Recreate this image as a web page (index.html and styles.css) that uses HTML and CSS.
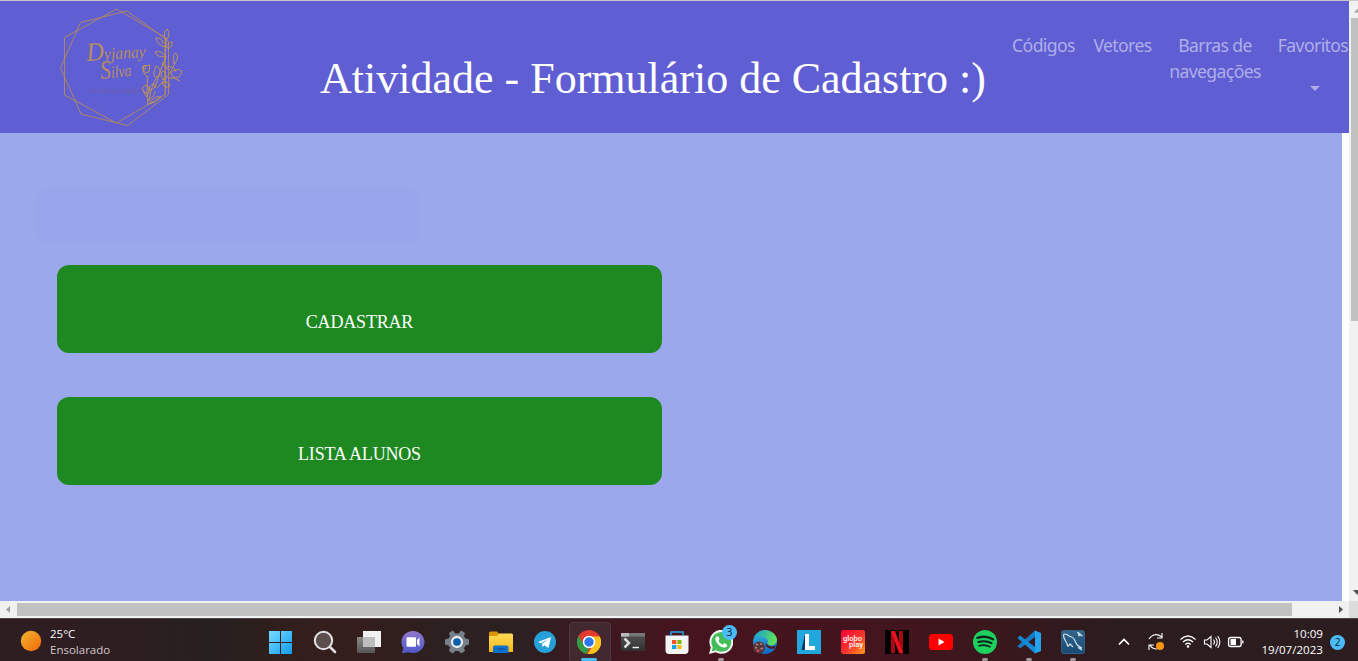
FILE: index.html
```html
<!DOCTYPE html>
<html lang="pt-BR">
<head>
<meta charset="utf-8">
<title>Atividade - Formulário de Cadastro</title>
<link rel="stylesheet" href="styles.css">
</head>
<body>
<div class="screen">
  <div class="viewport">
    <div class="page">
      <header class="header">
        <svg class="logo" viewBox="40 0 160 132" fill="none" stroke="#b58a58" stroke-width=".9">
          <path d="M64.500 37.500L116.500 9L165.500 37.500V94.500L116.500 123L64.500 95Z"/>
          <path d="M80.500 22.500L127 11L168.500 41V94.500L127.500 125.500L81 114L60.500 68Z"/>
          <path d="M165 38V95"/>
          <text class="script" x="87" y="61" textLength="59" lengthAdjust="spacingAndGlyphs" transform="rotate(-4 88 60)"><tspan class="initial">D</tspan>yjanay</text>
          <text class="script" x="101" y="79" textLength="31" lengthAdjust="spacingAndGlyphs" transform="rotate(-6 101 79)"><tspan class="initial">S</tspan>ilva</text>
          <text class="tagline" x="89" y="92.500" textLength="55">DESENVOLVIMENTO</text>
          <g stroke="#c9994a">
            <path d="M148 105Q146 86 148 76M148 94Q138 89 146 85Q151 88 148 94M149 91Q158 87 154 84Q149 84 149 91M148 100Q156 95 155 91M147 97L143 91M147 77Q142 72 143 67Q146 63 145 70M143 66L150 65L149 72Q145 74 143 70ZM156 66Q162 68 159 76Q153 79 154 72ZM157 77Q151 86 149 101M166 56Q160 70 155 88M165 51Q167 42 166 39M166 39Q162 34 167 29Q171 34 167 39ZM167 47Q157 46 156 38Q162 37 163 44M168 49Q174 45 172 42Q167 43 168 49M166 57Q156 57 155 52Q162 50 166 57M174 62Q172 54 176 53Q180 58 174 64ZM175 63Q171 74 157 88M171 73Q176 67 182 71Q180 80 173 77ZM168 78Q175 77 180 81M162 83Q171 80 169 87Q164 88 162 83M149 104Q154 95 161 97Q156 103 149 104M163 80Q159 73 163 71Q168 74 163 80M167 66Q175 67 176 72M170 70Q162 66 163 62"/>
          </g>
        </svg>
        <h1 class="title">Atividade - Formulário de Cadastro :)</h1>
        <nav class="nav">
          <a class="w1">Códigos</a><a class="w2">Vetores</a><a class="w3">Barras de<br>navegações</a><a class="w4">Favoritos<i class="caret"></i></a>
        </nav>
      </header>
      <main class="main">
        <div class="ghost"></div>
        <a class="button">CADASTRAR</a>
        <a class="button">LISTA ALUNOS</a>
      </main>
    </div>
    <div class="vscroll"><svg viewBox="0 0 9 17"><path d="M5 11.500L9 7.500V11.500Z" fill="#a0a0a0"/></svg><div class="vthumb"></div><svg class="down" viewBox="0 0 9 17"><path d="M4 6H9V10.500H8Z" fill="#505050"/></svg></div>
  </div>
  <div class="hscroll">
    <svg viewBox="0 0 17 17"><path d="M10 5V12L6 8.500Z" fill="#a0a0a0"/></svg>
    <div class="hthumb"></div>
    <svg class="right" viewBox="0 0 17 17"><path d="M7 5V12L11 8.500Z" fill="#505050"/></svg>
    <div class="corner"></div>
  </div>
  <footer class="taskbar">
    <svg width="0" height="0" class="defs"><defs>
      <linearGradient id="sun" x2="1" y2="1"><stop stop-color="#efb534"/><stop offset="1" stop-color="#f46808"/></linearGradient>
      <linearGradient id="win" x2="1" y2="1"><stop stop-color="#77dcff"/><stop offset="1" stop-color="#119bf0"/></linearGradient>
      <linearGradient id="task" x2="0" y2="1"><stop stop-color="#8a8a8a"/><stop offset="1" stop-color="#555"/></linearGradient>
      <linearGradient id="chat" x2="0" y2="1"><stop stop-color="#8f78cc"/><stop offset="1" stop-color="#4f57c8"/></linearGradient>
      <linearGradient id="folder" x2="0" y2="1"><stop stop-color="#ffdb59"/><stop offset="1" stop-color="#f8b816"/></linearGradient>
      <linearGradient id="edge" x2="0" y2="1"><stop stop-color="#39b9dc"/><stop offset="1" stop-color="#0e65c2"/></linearGradient>
      <linearGradient id="edge2" x2="1" y2=".3"><stop stop-color="#169cdd"/><stop offset="1" stop-color="#5ee05b"/></linearGradient>
      <linearGradient id="globo" x2="1" y2="1"><stop stop-color="#fb0234"/><stop offset=".55" stop-color="#fc352d"/><stop offset="1" stop-color="#ff9d1d"/></linearGradient>
      <linearGradient id="mysql" x2="0" y2="1"><stop stop-color="#34668c"/><stop offset="1" stop-color="#174a73"/></linearGradient>
      <linearGradient id="dark" x2="0" y2="1"><stop stop-color="#555"/><stop offset="1" stop-color="#303030"/></linearGradient>
    </defs></svg>
    <div class="weather">
      <svg width="22" height="22" viewBox="0 0 22 22"><circle cx="11" cy="11" r="10.200" fill="url(#sun)"/></svg>
      <div class="weather-text"><span>25°C</span><span class="dim">Ensolarado</span></div>
    </div>
    <div class="apps">
      <div class="app"><svg viewBox="0 0 24 24"><path d="M0 1H11V12H0ZM12 1H23V12H12ZM0 13H11V24H0ZM12 13H23V24H12Z" fill="url(#win)"/></svg></div>
      <div class="app"><svg viewBox="0 0 24 24"><circle cx="10.500" cy="10.500" r="8.700" fill="#5c4e4d" stroke="#e4e4e8" stroke-width="2"/><path d="M17 17L22 22" stroke="#dedee3" stroke-width="2.600" stroke-linecap="round"/></svg></div>
      <div class="app"><svg viewBox="0 0 24 24"><path d="M6 1H24V17H6Z" fill="#f1f1f1"/><path d="M0 7H18V23H0Z" fill="url(#task)"/><path d="M6 7H18V17H6Z" fill="#bdbdbd"/></svg></div>
      <div class="app"><svg viewBox="0 0 24 24"><path d="M12 1C5 1 .500 6 .500 12Q.500 16 2.500 18L1 22.500Q1 23.500 3 23L7 22.200Q9 23 12 23C18.500 23 23.500 18 23.500 12S18.500 1 12 1Z" fill="url(#chat)"/><rect x="5.500" y="7.300" width="9.500" height="9.500" rx="1" fill="#fff"/><path d="M16 10L18.500 7.500V16.500L16 14Z" fill="#fff"/></svg></div>
      <div class="app"><svg viewBox="0 0 24 24"><path d="M8 1L10 4H14L16 1L19.500 3L18.500 6.500L20.500 9L24 10V14L20.500 15L18.500 18L19.500 21L16 23L14 20.500H10L8 23L4.500 21L5.500 17.500L3.500 15L0 14V10L3.500 9L5.500 6.500L4.500 3Z" fill="#78818a" stroke="#78818a" stroke-linejoin="round"/><circle cx="12" cy="12" r="5" fill="#075eaf" stroke="#e9e9e9" stroke-width="2.300"/></svg></div>
      <div class="app"><svg viewBox="0 0 24 24"><path d="M0 3Q0 1.500 1.500 1.500H8L10 4H22.500Q24 4 24 5.500V9H0Z" fill="#d99408"/><path d="M0 6H8L10 3.500H22.500Q24 3.500 24 5V22H0Z" fill="url(#folder)"/><path d="M4 23V17.500Q4 15.500 6 15.500H17.500Q19.500 15.500 19.500 17.500V23Z" fill="#0e70ca"/><path d="M8 19H16" stroke="#0856a0" stroke-width="1.500"/></svg></div>
      <div class="app"><svg viewBox="0 0 24 24"><circle cx="12" cy="12" r="11" fill="#279fd7"/><path d="M5 12L18 7L15.500 18L11.500 15.300L9.500 17L9 14L15 9L8 13.300Z" fill="#fff"/></svg></div>
      <div class="app active"><svg viewBox="0 0 24 24"><circle cx="12" cy="12" r="12" fill="#e33b2e"/><path d="M1.600 6L6.800 15L12 18L9.800 23.800A12 12 0 0 1 1.600 6Z" fill="#2e9f48"/><path d="M12 6.500H22.700A12 12 0 0 1 10.500 24L17 14Z" fill="#fac31c"/><circle cx="12" cy="12" r="5.500" fill="#2c77ea" stroke="#fff" stroke-width="1.500"/></svg></div>
      <div class="app"><svg viewBox="0 0 24 24"><path d="M0 3H24V21H0Z" fill="url(#dark)"/><path d="M0 3H24V6.500H0Z" fill="#777"/><path d="M0 3H8V6.500H0Z" fill="#bbb"/><path d="M3.500 8.500L8 13L3.500 17.500" fill="none" stroke="#ddd" stroke-width="2.500"/><path d="M11.500 17.500H18" stroke="#eee" stroke-width="1.500"/></svg></div>
      <div class="app"><svg viewBox="0 0 24 24"><path d="M.500 5.500H23.500V20Q23.500 24 20 24H4Q.500 24 .500 20Z" fill="#f4f4f5"/><path d="M6 6V2H18V6" fill="none" stroke="#23a4e6" stroke-width="1.500"/><path d="M7 10H11.300V14H7Z" fill="#f25022"/><path d="M12.300 10H16.500V14H12.300Z" fill="#7fba00"/><path d="M7 15H11.300V19H7Z" fill="#00a4ef"/><path d="M12.300 15H16.500V19H12.300Z" fill="#ffb900"/></svg></div>
      <div class="app run"><svg viewBox="0 0 24 24"><path d="M0 24L1.800 17.500A12 12 0 1 1 6.500 22.300Z" fill="#f3f3f3"/><path d="M2.700 21.500L3.800 17A9.900 9.900 0 1 1 7 20.300Z" fill="#42bd58"/><path d="M7.500 6.500Q5 9 8 13Q11.500 18 16 17.500Q19 16.500 18 14.500L15 13L13.500 14.700Q10.500 13.500 9.500 10.700L10.600 9L9.500 6.500Z" fill="#fff"/></svg><span class="count">3</span></div>
      <div class="app"><svg viewBox="0 0 24 24"><circle cx="12" cy="12" r="12" fill="url(#edge)"/><path d="M1 8C5-2 21-2 24 9C24 15 18 17 14 14Q17 10 11 7Q5 5 1 10Z" fill="url(#edge2)"/><path d="M14 14Q15 16 19 16.500L23 15.500L21.500 18.500Q13 20 12.500 13Z" fill="#4b172a"/><circle cx="6" cy="17.500" r="6" fill="#553539"/><path d="M3 14L5 15M7 13.500L9 14.500M2 18L4 17.500M7.500 19L10 18" fill="none" stroke="#b18487" stroke-width="1.500"/><circle cx="5" cy="20.500" r="1.500" fill="#dd3250"/></svg></div>
      <div class="app"><svg viewBox="0 0 24 24"><path d="M0 0H24V24H0Z" fill="#21a7dc"/><path d="M8 4L4.500 20H16L9 18Z" fill="#083762"/><path d="M8 4H12V16H18V20H8Z" fill="#fff"/></svg></div>
      <div class="app"><svg viewBox="0 0 24 24"><rect width="24" height="24" rx="2.500" fill="url(#globo)"/><text class="globo" x="2" y="11" textLength="19" lengthAdjust="spacingAndGlyphs">globo</text><text class="globo" x="8" y="17" textLength="14" lengthAdjust="spacingAndGlyphs">play</text></svg></div>
      <div class="app"><svg viewBox="0 0 24 24"><path d="M0 0H24V24H0Z" fill="#000"/><path d="M6 1H10V23L6 23.500ZM14 1H18V23.500L14 23Z" fill="#a90812"/><path d="M6 1H10L18 23.500L14 23Z" fill="#e51420"/></svg></div>
      <div class="app"><svg viewBox="0 0 24 24"><rect y="4" width="24" height="16" rx="3.500" fill="#f00"/><path d="M9.500 8.500L15.500 12L9.500 15.500Z" fill="#fff"/></svg></div>
      <div class="app run"><svg viewBox="0 0 24 24"><circle cx="12" cy="12" r="12" fill="#1ed05e"/><g fill="none" stroke="#10251b" stroke-linecap="round"><path d="M4.500 7.800Q13 5.200 20 9.300" stroke-width="2.400"/><path d="M5.300 12Q12.500 9.800 18.500 13.200" stroke-width="2"/><path d="M6 15.800Q12 14 17 16.800" stroke-width="1.700"/></g></svg></div>
      <div class="app run"><svg viewBox="0 0 24 24"><path d="M18 .500L24 3V21L18 23.500Z" fill="#25a2ed"/><path d="M18 .500V7L3 18.500L.500 16Z" fill="#167bc4"/><path d="M18 23.500V17L3 5.500L.500 8Z" fill="#118bd5"/></svg></div>
      <div class="app run"><svg viewBox="0 0 24 24"><rect x=".5" y=".5" width="23" height="23" rx="2" fill="url(#mysql)" stroke="#315f83"/><path d="M7 16.500Q6 13 4 10Q1 4 4 4Q6 4 8 6Q13 7 14.500 12Q16 16 21 18L18 18L21 20M7 16.500L9 14L12 17" fill="none" stroke="#d4e1ea" stroke-width="1.200"/><path d="M16 2L18.500 3L21.500 6L19 5.500L17.500 6V4Z" fill="#d4e1ea" stroke="#d4e1ea" stroke-width=".6"/></svg></div>
    </div>
    <div class="tray">
      <svg viewBox="0 0 130 24" width="130" height="24" fill="none" stroke="#fff" stroke-width="1.300">
        <path d="M4 14.500L9 9.500L14 14.500" stroke-width="1.700"/>
        <path d="M34 9Q39 1.500 47 7M47 3V8H42M42 19Q37 19 35 15M34 20V15H39" stroke-width="1.100"/><circle cx="45" cy="16" r="4" fill="#f7960b" stroke="none"/>
        <path d="M65.500 9.500Q73 2.500 80.500 9.500M68 12Q73 7.500 78 12M70.300 14.500Q73 12 75.700 14.500"/><circle cx="73" cy="16.500" r="1.300" fill="#fff" stroke="none"/>
        <path d="M89.500 10H92L96 6.500V17.500L92 14H89.500ZM98.500 9.500Q100.500 12 98.500 14.500M100.500 7.500Q104 12 100.500 16.500M102.700 6Q107 12 102.700 18" stroke-width="1.100"/>
        <rect x="113.600" y="7.500" width="12.500" height="9" rx="2"/><path d="M115.500 9H121V15H115.500Z" fill="#fff" stroke="none"/><path d="M127.800 10.500V13.500"/>
      </svg>
      <div class="clock"><span>10:09</span><span>19/07/2023</span></div>
      <span class="notice">2</span>
    </div>
  </footer>
</div>
</body>
</html>
```
FILE: styles.css
```css
* { box-sizing: border-box; }
body { margin: 0; overflow: hidden; }
.screen { width: 1358px; height: 661px; display: flex; flex-direction: column; border-top: 1px solid #c8c8cb; font-family: "Open Sans", sans-serif; }
.viewport { display: flex; height: 600px; }
.page { width: 1349px; background: #fff; }
.header { display: flex; height: 132px; background: #5f5ed3; padding-left: 40px; }
.logo { width: 160px; height: 132px; flex: none; margin-top: -1px; }
.script { font: italic 17px "Liberation Serif", serif; fill: #b98d62; stroke: none; }
.initial { font-size: 26px; }
.tagline { font: 4.500px "Liberation Sans", sans-serif; fill: #72609c; stroke: none; }
.title { margin: 50px 0 0 120px; width: 667px; flex: none; white-space: nowrap; font: 400 44px/55px "Liberation Serif", serif; color: #fff; }
.nav { display: flex; margin-left: 21px; padding-top: 31px; font: 17.600px/26.400px "Noto Sans", sans-serif; letter-spacing: -.6px; color: #afaee9; text-align: center; white-space: nowrap; }
.nav a { display: block; flex: none; }
.w1 { width: 71px; }
.w2 { width: 87px; }
.w3 { width: 98px; }
.w4 { width: 98px; }
.caret { display: block; width: 0; margin: 28px auto 0; border: 5px solid transparent; border-top-color: #afaee9; border-bottom: 0; position: relative; left: 2px; }
.main { width: 1342px; height: 468px; background: #9ca8ec; padding: 54px 0 0 35px; }
.ghost { width: 385px; height: 56px; border-radius: 12px; background: #9aa6ec; margin-bottom: 22px; }
.button { display: block; width: 605px; height: 88px; margin: 0 0 44px 22px; padding-top: 46px; border-radius: 12px; background: #1e8921; color: #fff; font: 18px/22px "Liberation Serif", serif; letter-spacing: -.18px; text-align: center; }
.vscroll { width: 9px; display: flex; flex-direction: column; background: #f1f1f1; }
.vscroll svg { width: 9px; height: 17px; flex: none; }
.vthumb { height: 303px; margin-left: 2px; background: #c1c1c1; }
.vscroll .down { margin-top: auto; }
.hscroll { display: flex; height: 17px; background: #f1f1f1; }
.hscroll svg { width: 17px; height: 17px; flex: none; }
.hthumb { width: 1275px; height: 13px; margin-top: 2px; background: #c1c1c1; }
.hscroll .right { margin-left: auto; }
.corner { width: 9px; background: #dcdcdc; }
.taskbar { display: flex; height: 43px; border-top: 1px solid #4b4545; background: linear-gradient(90deg, #2e1d21 0, #2d1e21 130px, #26201f 215px, #301f1c 275px, #351e1b 350px, #2c2020 440px, #2c2022 520px, #3e1820 600px, #46141e 700px, #42151e 920px, #34191d 1040px, #2b1c20 1120px, #2c1d21 1358px); color: #fff; }
.defs { position: absolute; }
.weather { width: 259px; padding: 7px 0 0 20px; display: flex; gap: 8px; font-size: 11.500px; line-height: 16px; }
.weather svg { margin-top: 4px; }
.weather-text { display: flex; flex-direction: column; }
.dim { color: #cec9ca; }
.apps { display: flex; }
.app { position: relative; width: 44px; height: 42px; padding: 11px 10px; flex: none; }
.app svg { display: block; width: 24px; height: 24px; }
.active::before { content: ""; position: absolute; left: 2px; top: 3px; width: 40px; height: 39px; border: 1px solid #50383e; border-radius: 4px; background: #42292f; }
.active svg { position: relative; }
.active::after { content: ""; position: absolute; left: 14px; top: 39px; width: 16px; height: 3px; border-radius: 2px; background: #4cbcf7; }
.run::after { content: ""; position: absolute; left: 19px; top: 39px; width: 6px; height: 3px; border-radius: 2px; background: #a2959b; }
.count { position: absolute; left: 23px; top: 6px; width: 15px; height: 15px; border-radius: 50%; background: #4cbcf8; color: #10222e; font-size: 10.500px; line-height: 15px; text-align: center; }
.globo { font: 500 7px Roboto, sans-serif; fill: #fff; }
.tray { display: flex; margin-left: 20px; width: 240px; }
.tray svg { margin-top: 11px; flex: none; margin-right: 3px; }
.clock { width: 75px; flex: none; padding-top: 7px; display: flex; flex-direction: column; text-align: right; font-size: 11.600px; line-height: 16px; }
.notice { margin: 16px 0 0 7px; width: 15px; height: 15px; border-radius: 50%; background: #4cbcf8; color: #10222e; font-size: 10px; line-height: 15px; text-align: center; flex: none; }
```
